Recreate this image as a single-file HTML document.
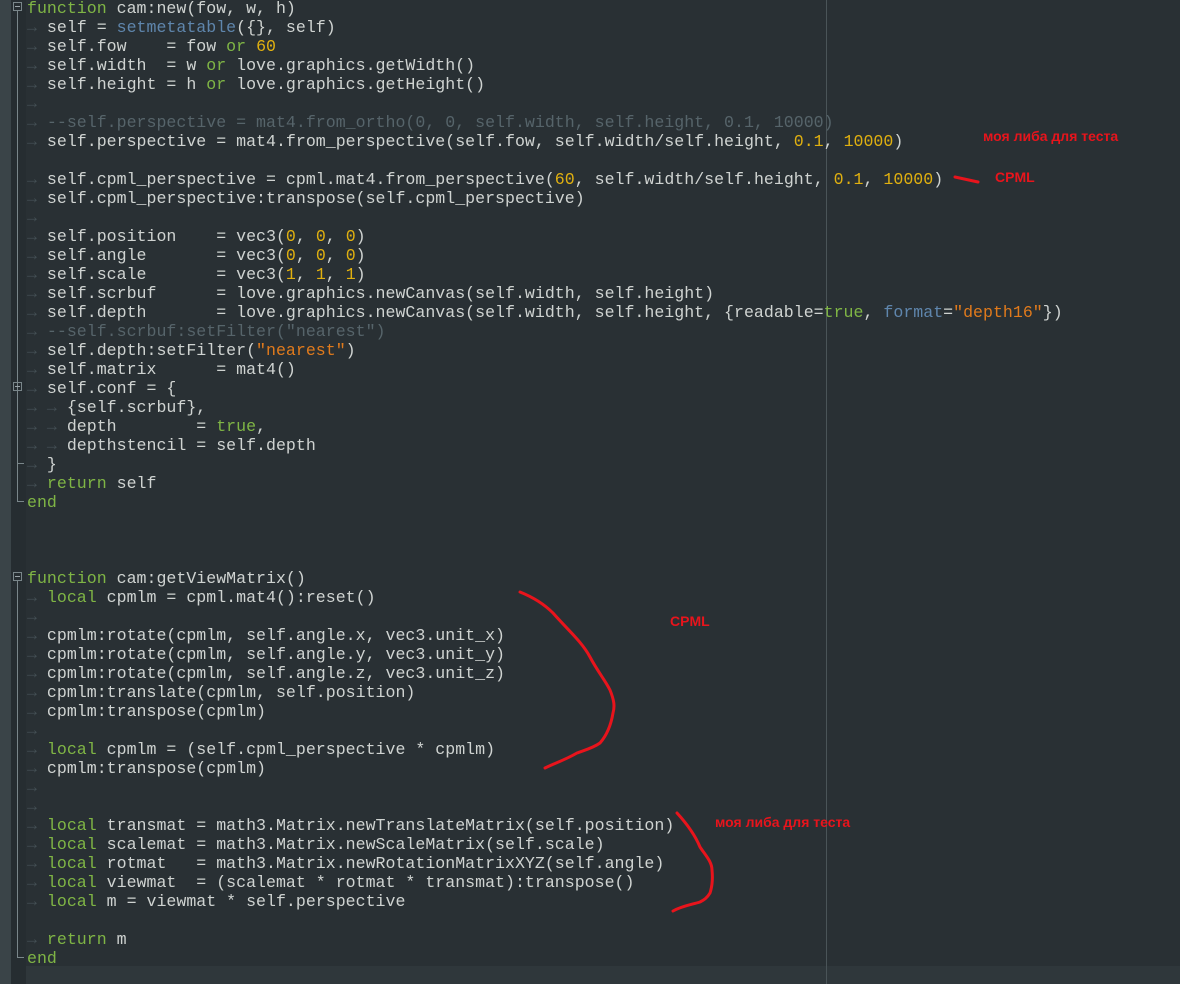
<!DOCTYPE html>
<html><head><meta charset="utf-8"><style>
html,body{margin:0;padding:0;width:1180px;height:984px;overflow:hidden;background:#293034;}
.g1{position:absolute;left:0;top:0;width:11px;height:984px;background:#3a4448;}
.g2{position:absolute;left:11px;top:0;width:15px;height:984px;background:#262d31;}
.bot{position:absolute;left:26px;top:966px;width:1154px;height:18px;background:#2f373b;}
.margin{position:absolute;left:826px;top:0;width:1px;height:984px;background:#4a5458;}
.code{position:absolute;left:27px;top:-1px;font-family:"Liberation Mono",monospace;font-size:16.6px;line-height:19px;color:#cfd3d1;white-space:pre;}
.k{color:#7fb545}.n{color:#e0b010}.c{color:#56646a}.f{color:#5f86ad}.s{color:#e07a1c}.t{color:#434e53}
.box{position:absolute;left:13px;width:9px;height:9px;border:1px solid #7a868a;box-sizing:border-box;}
.box:after{content:"";position:absolute;left:1px;right:1px;top:3px;height:1px;background:#9aa4a8;}
.vl{position:absolute;left:17px;width:1px;background:#7a868a;}
.hl{position:absolute;left:17px;width:7px;height:1px;background:#7a868a;}
.r{position:absolute;font-family:"Liberation Sans",sans-serif;font-weight:bold;color:#e8141c;font-size:14px;}
</style></head><body>
<div class="g1"></div><div class="g2"></div><div class="bot"></div><div class="margin"></div>
<div class="box" style="top:2px"></div><div class="vl" style="top:11px;height:491px"></div><div class="hl" style="top:501px"></div>
<div class="box" style="top:382px"></div><div class="hl" style="top:463px"></div>
<div class="box" style="top:572px"></div><div class="vl" style="top:581px;height:377px"></div><div class="hl" style="top:957px"></div>
<div class="code"><span class="k">function</span> cam:new(fow, w, h)
<span class="t">→ </span>self = <span class="f">setmetatable</span>({}, self)
<span class="t">→ </span>self.fow    = fow <span class="k">or</span> <span class="n">60</span>
<span class="t">→ </span>self.width  = w <span class="k">or</span> love.graphics.getWidth()
<span class="t">→ </span>self.height = h <span class="k">or</span> love.graphics.getHeight()
<span class="t">→ </span>
<span class="t">→ </span><span class="c">--self.perspective = mat4.from_ortho(0, 0, self.width, self.height, 0.1, 10000)</span>
<span class="t">→ </span>self.perspective = mat4.from_perspective(self.fow, self.width/self.height, <span class="n">0.1</span>, <span class="n">10000</span>)

<span class="t">→ </span>self.cpml_perspective = cpml.mat4.from_perspective(<span class="n">60</span>, self.width/self.height, <span class="n">0.1</span>, <span class="n">10000</span>)
<span class="t">→ </span>self.cpml_perspective:transpose(self.cpml_perspective)
<span class="t">→ </span>
<span class="t">→ </span>self.position    = vec3(<span class="n">0</span>, <span class="n">0</span>, <span class="n">0</span>)
<span class="t">→ </span>self.angle       = vec3(<span class="n">0</span>, <span class="n">0</span>, <span class="n">0</span>)
<span class="t">→ </span>self.scale       = vec3(<span class="n">1</span>, <span class="n">1</span>, <span class="n">1</span>)
<span class="t">→ </span>self.scrbuf      = love.graphics.newCanvas(self.width, self.height)
<span class="t">→ </span>self.depth       = love.graphics.newCanvas(self.width, self.height, {readable=<span class="k">true</span>, <span class="f">format</span>=<span class="s">"depth16"</span>})
<span class="t">→ </span><span class="c">--self.scrbuf:setFilter("nearest")</span>
<span class="t">→ </span>self.depth:setFilter(<span class="s">"nearest"</span>)
<span class="t">→ </span>self.matrix      = mat4()
<span class="t">→ </span>self.conf = {
<span class="t">→ → </span>{self.scrbuf},
<span class="t">→ → </span>depth        = <span class="k">true</span>,
<span class="t">→ → </span>depthstencil = self.depth
<span class="t">→ </span>}
<span class="t">→ </span><span class="k">return</span> self
<span class="k">end</span>



<span class="k">function</span> cam:getViewMatrix()
<span class="t">→ </span><span class="k">local</span> cpmlm = cpml.mat4():reset()
<span class="t">→ </span>
<span class="t">→ </span>cpmlm:rotate(cpmlm, self.angle.x, vec3.unit_x)
<span class="t">→ </span>cpmlm:rotate(cpmlm, self.angle.y, vec3.unit_y)
<span class="t">→ </span>cpmlm:rotate(cpmlm, self.angle.z, vec3.unit_z)
<span class="t">→ </span>cpmlm:translate(cpmlm, self.position)
<span class="t">→ </span>cpmlm:transpose(cpmlm)
<span class="t">→ </span>
<span class="t">→ </span><span class="k">local</span> cpmlm = (self.cpml_perspective * cpmlm)
<span class="t">→ </span>cpmlm:transpose(cpmlm)
<span class="t">→ </span>
<span class="t">→ </span>
<span class="t">→ </span><span class="k">local</span> transmat = math3.Matrix.newTranslateMatrix(self.position)
<span class="t">→ </span><span class="k">local</span> scalemat = math3.Matrix.newScaleMatrix(self.scale)
<span class="t">→ </span><span class="k">local</span> rotmat   = math3.Matrix.newRotationMatrixXYZ(self.angle)
<span class="t">→ </span><span class="k">local</span> viewmat  = (scalemat * rotmat * transmat):transpose()
<span class="t">→ </span><span class="k">local</span> m = viewmat * self.perspective

<span class="t">→ </span><span class="k">return</span> m
<span class="k">end</span></div>
<div class="r" style="left:983px;top:128px">моя либа для теста</div>
<div class="r" style="left:995px;top:169px">CPML</div>
<div class="r" style="left:670px;top:613px">CPML</div>
<div class="r" style="left:715px;top:814px">моя либа для теста</div>
<svg style="position:absolute;left:0;top:0" width="1180" height="984">
<g fill="none" stroke="#e8141c" stroke-width="3" stroke-linecap="round" stroke-linejoin="round">
<path d="M955 177 L978 182"/>
<path d="M520 592 C535 598 545 605 553 613 C568 630 582 642 590 657 C598 672 605 680 610 690 C614 700 615 706 613 713 C611 725 607 735 600 743 C593 748 585 750 577 753 C565 760 555 763 545 768"/>
<path d="M677 813 C688 825 695 835 700 847 C706 856 712 862 712 870 C713 880 712 887 710 893 C707 898 704 900 700 902 C690 905 682 906 673 911"/>
</g></svg>
</body></html>
